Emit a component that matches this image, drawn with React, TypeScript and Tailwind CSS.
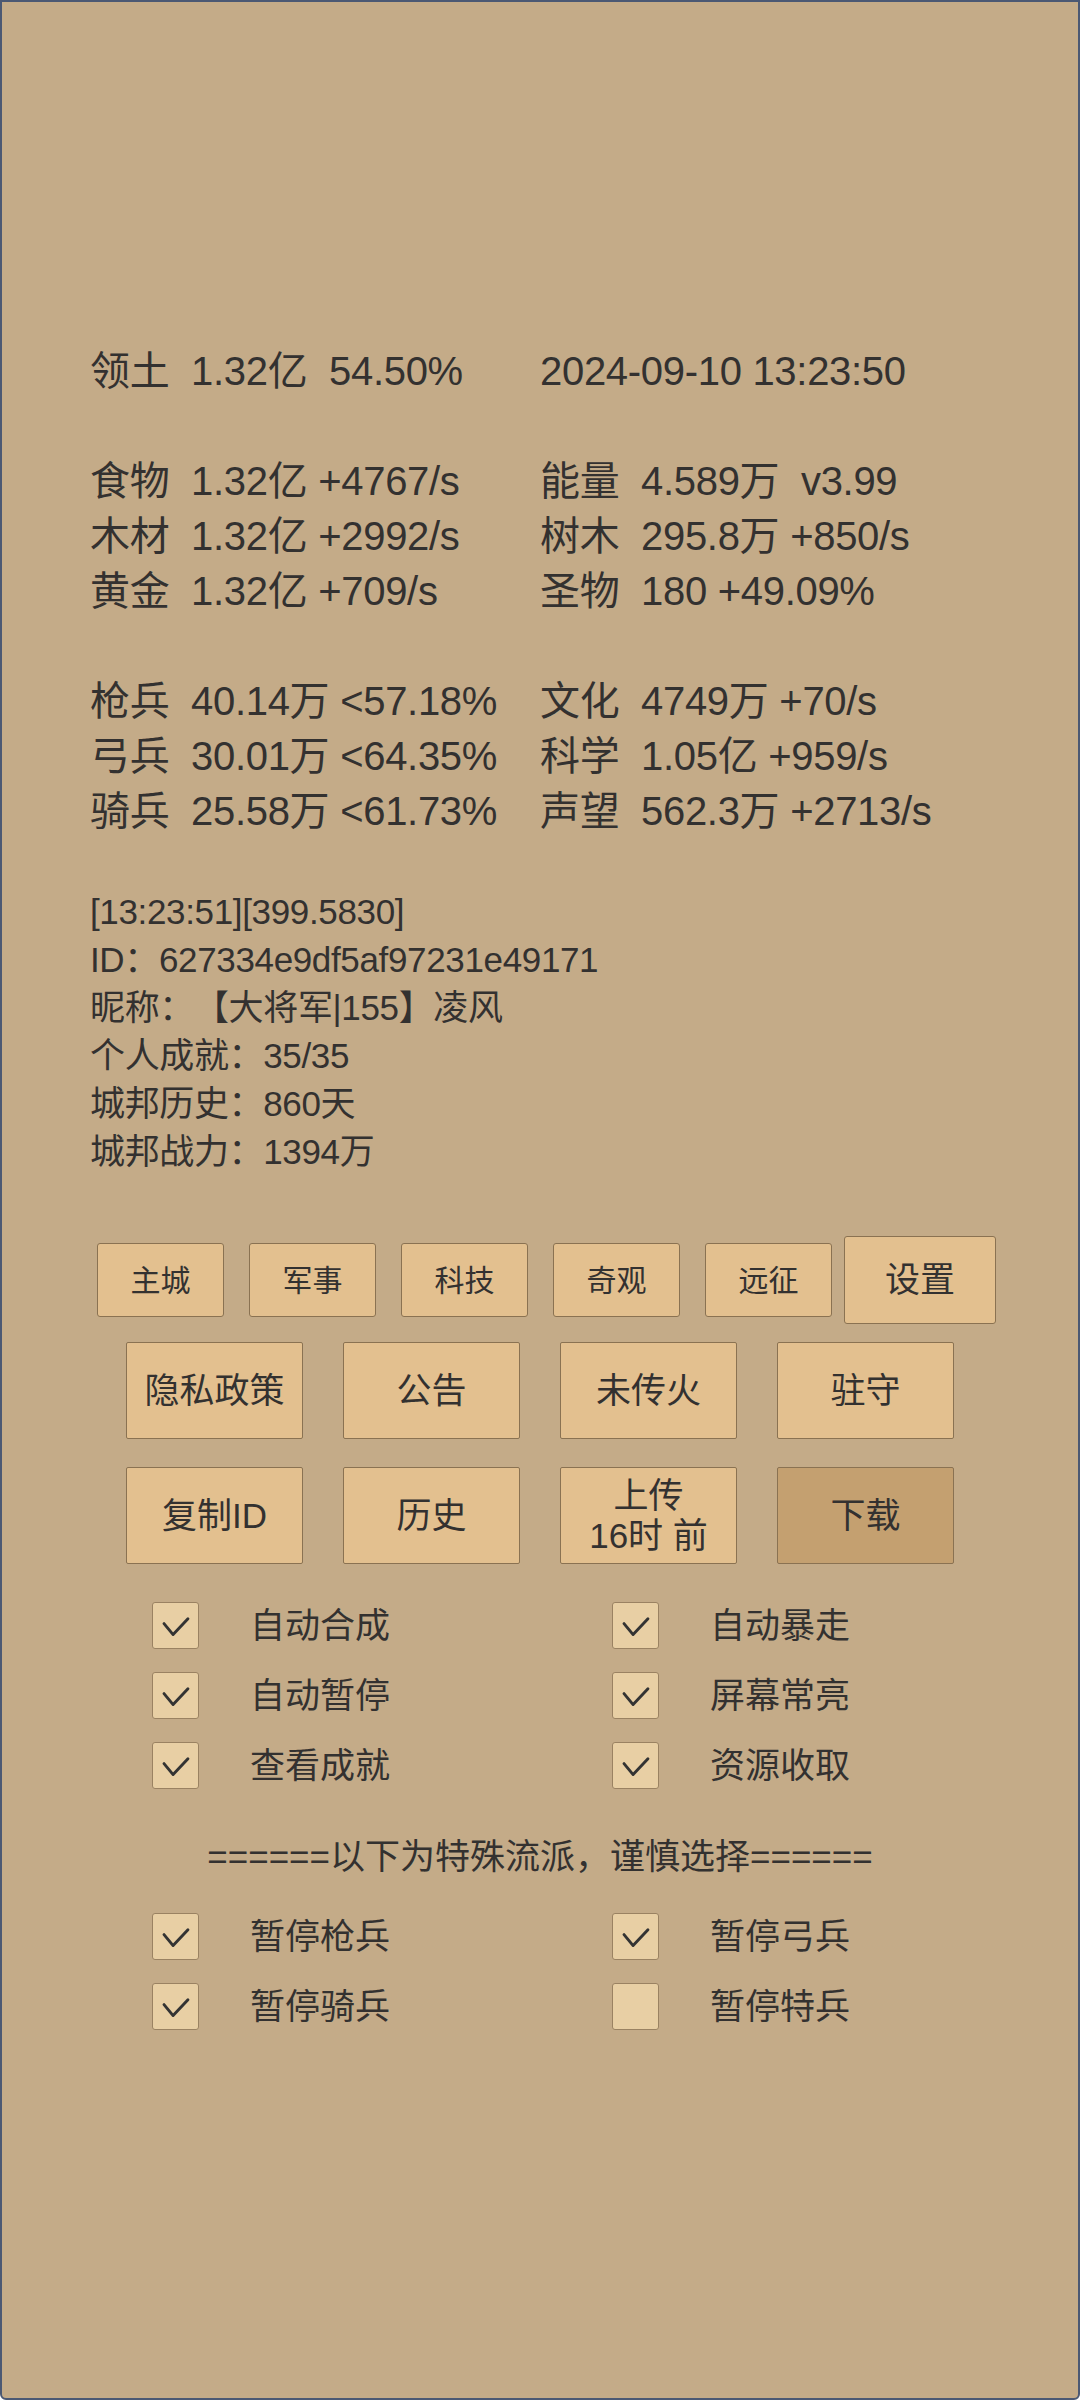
import React from "react";

const F = { fontFamily: '"Liberation Sans", "Noto Sans CJK SC", sans-serif' };

function StatRow({ left, right }: { left?: string; right?: string }) {
  return (
    <div className="flex h-[55px] items-center leading-[55px] text-[40px] whitespace-pre tracking-[-0.3px]">
      <div className="w-[450px]">{left ?? ""}</div>
      <div>{right ?? ""}</div>
    </div>
  );
}

function Check({ checked }: { checked: boolean }) {
  return (
    <div className="w-[47px] h-[47px] rounded-[3px] border border-[#9a8262] bg-[#e8cfa4] flex items-center justify-center">
      {checked && (
        <svg width="47" height="47" viewBox="0 0 47 47">
          <path d="M11.5 21.5 L21 33 L36.5 16.5" fill="none" stroke="#333333" strokeWidth="3" strokeLinecap="round" strokeLinejoin="round" />
        </svg>
      )}
    </div>
  );
}

function CheckItem({ label, checked }: { label: string; checked: boolean }) {
  return (
    <div className="w-[460px] flex items-center">
      <Check checked={checked} />
      <span className="ml-[51px] text-[35px] leading-[47px]">{label}</span>
    </div>
  );
}

function SmallBtn({ label }: { label: string }) {
  return (
    <div className="w-[127px] h-[74px] rounded-[3px] border border-[#8a7252] bg-[#e3c08f] flex items-center justify-center text-[30px]">
      {label}
    </div>
  );
}

function BigBtn({ children, dark }: { children: React.ReactNode; dark?: boolean }) {
  return (
    <div
      className={
        dark
          ? "w-[177px] h-[97px] rounded-[2px] border border-[#8a7252] bg-[#c4a070] flex flex-col items-center justify-center text-[35px] leading-[40px]"
          : "w-[177px] h-[97px] rounded-[2px] border border-[#8a7252] bg-[#e3c08f] flex flex-col items-center justify-center text-[35px] leading-[40px]"
      }
    >
      {children}
    </div>
  );
}

export default function App() {
  return (
    <div
      style={F}
      className="w-[1080px] h-[2400px] box-border border-2 border-[#4b5873] rounded-b-[6px] bg-[#c4ab88] text-[#333130] flex flex-col [text-spacing-trim:space-all]"
    >
      <div className="pt-[342px] pl-[88px]">
        <StatRow left="领土  1.32亿  54.50%" right="2024-09-10 13:23:50" />
        <StatRow />
        <StatRow left="食物  1.32亿 +4767/s" right="能量  4.589万  v3.99" />
        <StatRow left="木材  1.32亿 +2992/s" right="树木  295.8万 +850/s" />
        <StatRow left="黄金  1.32亿 +709/s" right="圣物  180 +49.09%" />
        <StatRow />
        <StatRow left="枪兵  40.14万 <57.18%" right="文化  4749万 +70/s" />
        <StatRow left="弓兵  30.01万 <64.35%" right="科学  1.05亿 +959/s" />
        <StatRow left="骑兵  25.58万 <61.73%" right="声望  562.3万 +2713/s" />
      </div>

      <div className="mt-[49px] pl-[88px] text-[35px] leading-[48px] whitespace-pre tracking-[-0.35px]">
        <div>[13:23:51][399.5830]</div>
        <div>ID：627334e9df5af97231e49171</div>
        <div>昵称：【大将军|155】凌风</div>
        <div>个人成就：35/35</div>
        <div>城邦历史：860天</div>
        <div>城邦战力：1394万</div>
      </div>

      <div className="mt-[60px] h-[88px] pl-[95px] flex items-center">
        <div className="flex gap-[25px]">
          <SmallBtn label="主城" />
          <SmallBtn label="军事" />
          <SmallBtn label="科技" />
          <SmallBtn label="奇观" />
          <SmallBtn label="远征" />
        </div>
        <div className="ml-[12px] w-[152px] h-[88px] rounded-[3px] border border-[#8a7252] bg-[#e3c08f] flex items-center justify-center text-[35px]">
          设置
        </div>
      </div>

      <div className="mt-[18px] pl-[124px] flex gap-[40px]">
        <BigBtn>隐私政策</BigBtn>
        <BigBtn>公告</BigBtn>
        <BigBtn>未传火</BigBtn>
        <BigBtn>驻守</BigBtn>
      </div>

      <div className="mt-[28px] pl-[124px] flex gap-[40px]">
        <BigBtn>复制ID</BigBtn>
        <BigBtn>历史</BigBtn>
        <BigBtn>
          <span>上传</span>
          <span className="whitespace-pre">16时 前</span>
        </BigBtn>
        <BigBtn dark>下载</BigBtn>
      </div>

      <div className="mt-[38px] pl-[150px] flex flex-col gap-[23px]">
        <div className="flex">
          <CheckItem label="自动合成" checked />
          <CheckItem label="自动暴走" checked />
        </div>
        <div className="flex">
          <CheckItem label="自动暂停" checked />
          <CheckItem label="屏幕常亮" checked />
        </div>
        <div className="flex">
          <CheckItem label="查看成就" checked />
          <CheckItem label="资源收取" checked />
        </div>
      </div>

      <div className="mt-[44px] h-[48px] flex items-center justify-center text-[35px] leading-[48px]">
        ======以下为特殊流派，谨慎选择======
      </div>

      <div className="mt-[32px] pl-[150px] flex flex-col gap-[23px]">
        <div className="flex">
          <CheckItem label="暂停枪兵" checked />
          <CheckItem label="暂停弓兵" checked />
        </div>
        <div className="flex">
          <CheckItem label="暂停骑兵" checked />
          <CheckItem label="暂停特兵" checked={false} />
        </div>
      </div>
    </div>
  );
}
